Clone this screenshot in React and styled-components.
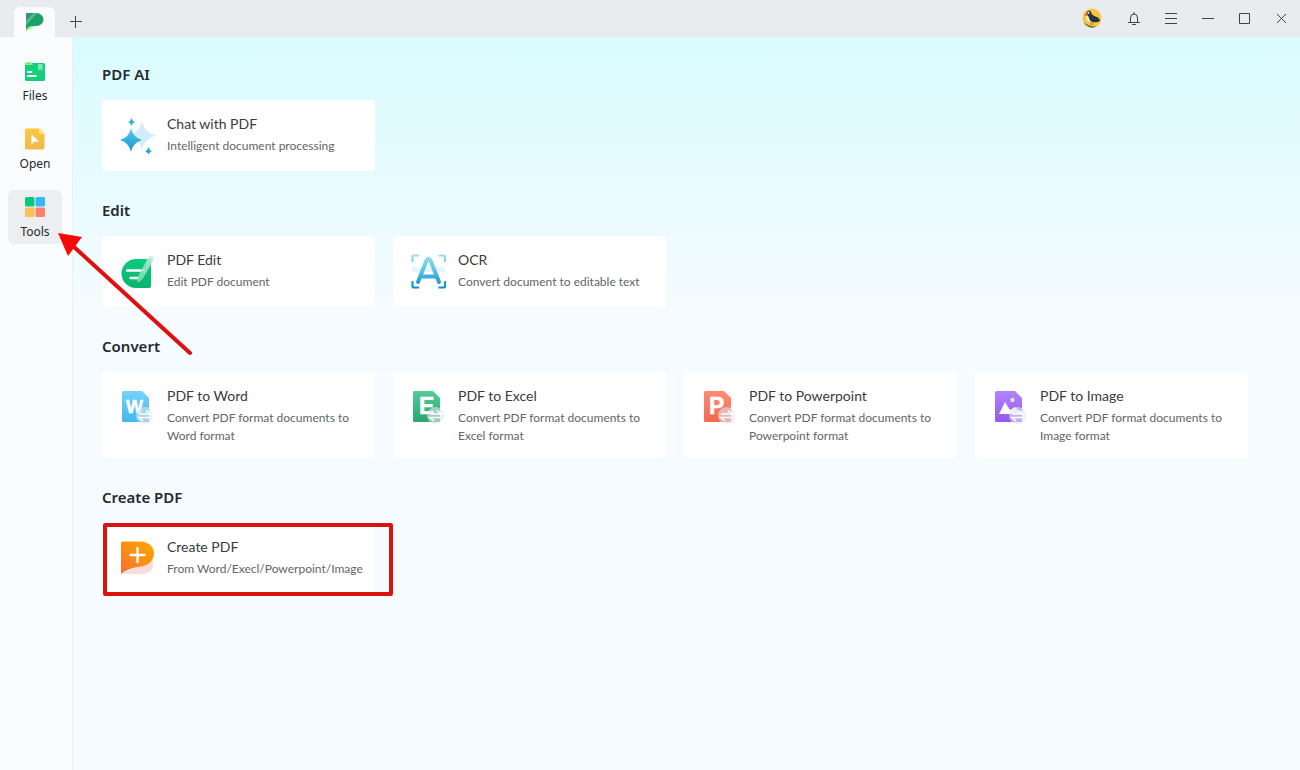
import styled, { createGlobalStyle } from 'styled-components';

const FilesIcon = () => (
	<svg width='24' height='24' viewBox='0 0 24 24'>
		<rect x='2' y='4' width='20' height='18' rx='1.500' fill='#12cf7c' />
		<path d='M2 6V4.500A1.500 1.500 0 0 1 3.500 3H8l2 3z' fill='#8dec8c' />
		<path d='M15 5h4.500v7l-2.200-1.800L15 12z' fill='#7be6b0' />
		<path d='M5 13h3.500M5 17h8' stroke='#fff' strokeWidth='1.800' strokeLinecap='round' />
	</svg>
);

const OpenIcon = () => (
	<svg width='24' height='24' viewBox='0 0 24 24'>
		<defs>
			<linearGradient id='open' x1='0' y1='0' x2='0' y2='1'>
				<stop offset='0' stopColor='#fac83f' />
				<stop offset='1' stopColor='#f0b94f' />
			</linearGradient>
		</defs>
		<path d='M3.500 1.500H16l5.500 5.500v13.500a2 2 0 0 1-2 2h-16a1.500 1.500 0 0 1-1.500-1.500V3a1.500 1.500 0 0 1 1.500-1.500z' fill='url(#open)' />
		<path d='M16 1.500h1.500l4 4V7h-4a1.500 1.500 0 0 1-1.500-1.500z' fill='#ffe57c' />
		<path d='M8.500 7.200v10.300l2.700-2.700h5z' fill='#fff' />
	</svg>
);

const ToolsIcon = () => (
	<svg width='24' height='24' viewBox='0 0 24 24'>
		<rect x='2' y='2' width='9.500' height='9.500' rx='1.500' fill='#0bc878' />
		<rect x='12.500' y='2' width='9.500' height='9.500' rx='1.500' fill='#38b6f8' />
		<rect x='2' y='12.500' width='9.500' height='9.500' rx='1.500' fill='#fbc05a' />
		<rect x='12.500' y='12.500' width='9.500' height='9.500' rx='1.500' fill='#fb8468' />
	</svg>
);

const LogoIcon = () => (
	<svg width='20' height='20' viewBox='0 0 20 20'>
		<defs>
			<linearGradient id='logo' x1='0' y1='0' x2='1' y2='1'>
				<stop offset='0' stopColor='#2f9c70' />
				<stop offset='1' stopColor='#0aa564' />
			</linearGradient>
		</defs>
		<path d='M1 1h10.500a7 6.500 0 0 1 0 13H8L1 18.500z' fill='url(#logo)' />
		<path d='M1 9L9 1h3L1 13z' fill='#8bd8b8' opacity='0.500' />
		<path d='M1 18.800c1-3.500 3-5 8.500-4.800L7.500 15.500z' fill='#9cf77a' />
	</svg>
);

const AvatarIcon = () => (
	<svg width='20' height='20' viewBox='0 0 20 20'>
		<circle cx='10' cy='10' r='9.500' fill='#f6c544' />
		<path d='M1.500 14.500a9.500 9.500 0 0 0 13 4c-4 0-9-1.500-13-4z' fill='#6f7b35' />
		<path d='M4.500 4.500C6 2 9 2.500 9.200 4.500c.3 2 2 3 4.500 4 2.500 1 4.300 2.500 4.300 4.500-3 2-8.500 1.500-10.500-1C5.500 10 6.500 8 4.500 6z' fill='#263440' />
		<path d='M5 7.500c-1.500 2.500 0 6 4 6.500-1.500-2-2-4-2.700-6z' fill='#f5f0e2' />
		<path d='M5 4.200L2.500 6.500l.7 1.700L5.500 6.500z' fill='#e3662c' />
		<circle cx='6.500' cy='4.800' r='1' fill='#fff' />
		<path d='M9 13.500v3.500M11 14v3' stroke='#c0702a' strokeWidth='0.800' />
	</svg>
);

const BellIcon = () => (
	<svg width='16' height='16' viewBox='0 0 16 16' fill='none' stroke='#3c4247'>
		<path d='M8 2.500v1.500M4.500 12.500V8a3.500 4 0 0 1 7 0v4.500M2.500 12.500h11M6.500 14.500h3' strokeLinecap='round' />
	</svg>
);

const LineIcon = ({ d }) => (
	<svg width='16' height='16' viewBox='0 0 16 16' fill='none' stroke='#3c4247'>
		<path d={d} />
	</svg>
);

const ChatIcon = () => (
	<svg width='40' height='40' viewBox='0 0 40 40'>
		<defs>
			<linearGradient id='star' x1='0' y1='0' x2='0' y2='1'>
				<stop offset='0' stopColor='#62c8ee' />
				<stop offset='1' stopColor='#0b97cf' />
			</linearGradient>
		</defs>
		<path d='M25 7q2.500 12 14 14.500Q27.500 24 25 36q-2.500-12-14-14.500Q22.500 19 25 7z' fill='#d3edfb' />
		<path d='M14 14q2 9.500 11 12-9 2.500-11 12-2-9.500-11-12 9-2.500 11-12z' fill='url(#star)' />
		<path d='M14.500 4q.6 3 3.500 4-2.900 1-3.500 4-.6-3-3.500-4 2.900-1 3.500-4z' fill='#36aedd' />
		<path d='M31.500 33q.6 3 3.500 4-2.900 1-3.500 4-.6-3-3.500-4 2.900-1 3.500-4z' fill='#26a4d8' />
	</svg>
);

const EditIcon = () => (
	<svg width='40' height='40' viewBox='0 0 40 40'>
		<defs>
			<linearGradient id='edit' x1='0' y1='0' x2='0' y2='1'>
				<stop offset='0' stopColor='#0acb80' />
				<stop offset='1' stopColor='#0bb36e' />
			</linearGradient>
			<linearGradient id='pen' x1='1' y1='0' x2='0' y2='1'>
				<stop offset='0' stopColor='#c9eee0' />
				<stop offset='1' stopColor='#6fdcae' />
			</linearGradient>
		</defs>
		<path d='M19 9h15v27a2 2 0 0 1-2 2H19a14.500 14.500 0 0 1 0-29z' fill='url(#edit)' />
		<path d='M10 20.500h17M13.500 28h8' stroke='#fff' strokeWidth='2.400' strokeLinecap='round' />
		<path d='M31 8q2-3 4.500-1.500 2 1.500.5 4.500L25 30l-5 3 .5-6z' fill='url(#pen)' opacity='0.850' />
	</svg>
);

const OcrIcon = () => (
	<svg width='40' height='40' viewBox='0 0 40 40' fill='none'>
		<defs>
			<linearGradient id='ocr' gradientUnits='userSpaceOnUse' x1='0' y1='5' x2='0' y2='38'>
				<stop offset='0' stopColor='#9edbf5' />
				<stop offset='0.450' stopColor='#5cc3ea' />
				<stop offset='1' stopColor='#078fc5' />
			</linearGradient>
		</defs>
		<path
			d='M4.500 12V7A1.500 1.500 0 0 1 6 5.500h5M30.500 5.500h5A1.500 1.500 0 0 1 37 7v5M37 31v5a1.500 1.500 0 0 1-1.500 1.500h-5M11 37.500H6A1.500 1.500 0 0 1 4.500 36v-5'
			stroke='url(#ocr)'
			strokeWidth='2.200'
		/>
		<path d='M4 17h33v5H4z' fill='#d8f1fb' opacity='0.700' />
		<path d='M10 32l8.500-21.500q2-3 4 0L31 32M13.500 26.500h14' stroke='url(#ocr)' strokeWidth='4' strokeLinecap='round' strokeLinejoin='round' />
	</svg>
);

const sheetColors = {
	word: ['#76d2fb', '#43b8ea'],
	excel: ['#55cb99', '#2ba472'],
	ppt: ['#fd8d74', '#f2694e'],
	image: ['#b184fb', '#9558ef'],
};

const SheetIcon = ({ kind, children }) => (
	<svg width='40' height='40' viewBox='0 0 40 40'>
		<defs>
			<linearGradient id={kind} x1='0' y1='0' x2='0' y2='1'>
				<stop offset='0' stopColor={sheetColors[kind][0]} />
				<stop offset='1' stopColor={sheetColors[kind][1]} />
			</linearGradient>
		</defs>
		<path d='M6.500 5H25l7 7v24H6.500A1.500 1.500 0 0 1 5 34.500v-28A1.500 1.500 0 0 1 6.500 5z' fill={`url(#${kind})`} />
		{children}
		<circle cx='27.500' cy='29.500' r='8.500' fill='#dfe6ee' opacity='0.600' />
		<path d='M22 28h11l-4-3.500M33 31.500H22l4 3.500' fill='none' stroke='#fff' strokeWidth='1.600' />
	</svg>
);

const CreateIcon = () => (
	<svg width='40' height='40' viewBox='0 0 40 40'>
		<defs>
			<linearGradient id='create' x1='1' y1='0' x2='0' y2='1'>
				<stop offset='0' stopColor='#ffa500' />
				<stop offset='0.500' stopColor='#fd8f12' />
				<stop offset='1' stopColor='#fb6a3c' />
			</linearGradient>
		</defs>
		<path d='M4 37L36 24q1 5-2 9-3 4-9 4z' fill='#fddcd7' />
		<path d='M6 4.500h17.500c7.500 0 13.500 5 13.500 11.500 0 7.500-5 12-13 13.500C14 31 9 33 4 37V6.500a2 2 0 0 1 2-2z' fill='url(#create)' />
		<path d='M20.500 11v14M13.500 18h14' stroke='#fff' strokeWidth='2.400' strokeLinecap='round' />
	</svg>
);

const sections = [
	{
		title: 'PDF AI',
		tools: [{ name: 'Chat with PDF', text: 'Intelligent document processing', icon: <ChatIcon /> }],
	},
	{
		title: 'Edit',
		tools: [
			{ name: 'PDF Edit', text: 'Edit PDF document', icon: <EditIcon /> },
			{ name: 'OCR', text: 'Convert document to editable text', icon: <OcrIcon /> },
		],
	},
	{
		title: 'Convert',
		tools: [
			{
				name: 'PDF to Word',
				text: 'Convert PDF format documents to Word format',
				icon: (
					<SheetIcon kind='word'>
						<SheetLetter x='9' y='27'>W</SheetLetter>
					</SheetIcon>
				),
			},
			{
				name: 'PDF to Excel',
				text: 'Convert PDF format documents to Excel format',
				icon: (
					<SheetIcon kind='excel'>
						<SheetLetter x='11' y='28'>E</SheetLetter>
					</SheetIcon>
				),
			},
			{
				name: 'PDF to Powerpoint',
				text: 'Convert PDF format documents to Powerpoint format',
				icon: (
					<SheetIcon kind='ppt'>
						<SheetLetter x='10' y='28'>P</SheetLetter>
					</SheetIcon>
				),
			},
			{
				name: 'PDF to Image',
				text: 'Convert PDF format documents to Image format',
				icon: (
					<SheetIcon kind='image'>
						<path d='M9 28l6-12 5 8 5-3 7 7z' fill='#fff' />
						<circle cx='22.500' cy='14' r='2.200' fill='#eadcff' />
					</SheetIcon>
				),
			},
		],
	},
	{
		title: 'Create PDF',
		tools: [
			{ name: 'Create PDF', text: 'From Word/Execl/Powerpoint/Image', icon: <CreateIcon />, marked: true },
		],
	},
];

function SheetLetter({ x, y, children }) {
	return (
		<text
			x={x}
			y={y}
			fill='#fff'
			fontFamily='Liberation Sans, sans-serif'
			fontWeight='700'
			fontSize={children === 'W' ? 18 : 23}
			stroke='#fff'
			strokeWidth='0.500'
		>
			{children}
		</text>
	);
}

const App = () => {
	return (
		<Window>
			<GlobalStyle />
			<TitleBar>
				<HomeTab aria-label='Home'>
					<LogoIcon />
				</HomeTab>
				<NewTab aria-label='New tab'>
					<LineIcon d='M7.500 2v12M2 7.500h12' />
				</NewTab>
				<WindowButtons>
					<BarButton $wide aria-label='Account'><AvatarIcon /></BarButton>
					<BarButton aria-label='Notifications'><BellIcon /></BarButton>
					<BarButton aria-label='Menu'><LineIcon d='M2 3.500h12M2 8.500h12M2 13.500h12' /></BarButton>
					<BarButton aria-label='Minimize'><LineIcon d='M2 8.500h12' /></BarButton>
					<BarButton aria-label='Maximize'><LineIcon d='M2.500 3.500h10v10h-10z' /></BarButton>
					<BarButton aria-label='Close'><LineIcon d='M3 4l9 9M12 4l-9 9' /></BarButton>
				</WindowButtons>
			</TitleBar>

			<Body>
				<Sidebar>
					<NavButton><FilesIcon />Files</NavButton>
					<NavButton><OpenIcon />Open</NavButton>
					<NavButton $active>
						<ToolsIcon />
						Tools
						<Arrow width='142' height='132' viewBox='0 0 142 132'>
							<path d='M15 13L132 120' stroke='#e01010' strokeWidth='4' strokeLinecap='round' />
							<path d='M0 0L24 4 10 23z' fill='#f80808' />
						</Arrow>
					</NavButton>
				</Sidebar>

				<Main>
					{sections.map(({ title, tools }) => (
						<section key={title}>
							<SectionTitle>{title}</SectionTitle>
							<CardGrid>
								{tools.map(({ name, text, icon, marked }) => (
									<Card key={name}>
										{icon}
										<CardText>
											<CardName>{name}</CardName>
											<CardInfo>{text}</CardInfo>
										</CardText>
										{marked && <Marker />}
									</Card>
								))}
							</CardGrid>
						</section>
					))}
				</Main>
			</Body>
		</Window>
	);
};

export default App;

const GlobalStyle = createGlobalStyle`
	* {
		box-sizing: border-box;
	}
	body {
		margin: 0;
		font-family: 'Noto Sans', 'Open Sans', sans-serif;
		color: #24292e;
	}
	button {
		border: 0;
		padding: 0;
		background: none;
		font: inherit;
		color: inherit;
		cursor: pointer;
	}
	svg {
		flex-shrink: 0;
	}
`;

const Window = styled.div`
	display: flex;
	flex-direction: column;
	min-height: 100vh;
`;

const TitleBar = styled.header`
	display: flex;
	align-items: flex-start;
	height: 37px;
	padding-left: 14px;
	background: #e8ecef;
`;

const HomeTab = styled.button`
	display: flex;
	align-items: center;
	justify-content: center;
	align-self: flex-end;
	width: 41px;
	height: 30px;
	border-radius: 6px 6px 0 0;
	background: #f9fbfd;
`;

const NewTab = styled(HomeTab)`
	width: 42px;
	background: none;
`;

const BarButton = styled.button`
	display: flex;
	align-items: center;
	justify-content: center;
	width: ${({ $wide }) => ($wide ? '46px' : '36px')};
	height: 36px;
`;

const WindowButtons = styled.div`
	display: flex;
	gap: 1px;
	margin-left: auto;
`;

const Body = styled.div`
	display: flex;
	flex: 1;
`;

const Sidebar = styled.nav`
	display: flex;
	flex-direction: column;
	gap: 14px;
	width: 73px;
	padding: 17px 10px 0 8px;
	border-right: 1px solid #edf1f4;
	background: #f9fbfd;
`;

const NavButton = styled.button`
	position: relative;
	display: flex;
	flex-direction: column;
	align-items: center;
	gap: 4px;
	height: 54px;
	padding-top: 5px;
	border-radius: 6px;
	background: ${({ $active }) => ($active ? '#eceef0' : 'transparent')};
	font-size: 12px;
	line-height: 18px;
`;

const Arrow = styled.svg`
	position: absolute;
	top: 43px;
	left: 50px;
	z-index: 1;
	pointer-events: none;
`;

const Main = styled.main`
	display: flex;
	flex: 1;
	flex-direction: column;
	gap: 29px;
	padding: 27px 52px 27px 29px;
	background: linear-gradient(#d9fcff, #f5fbff 270px);
`;

const SectionTitle = styled.h2`
	margin: 0 0 15px;
	font-size: 15px;
	font-weight: 600;
	line-height: 21px;
`;

const CardGrid = styled.div`
	display: grid;
	grid-template-columns: repeat(4, 1fr);
	gap: 18px;
`;

const Card = styled.button`
	position: relative;
	display: flex;
	align-items: flex-start;
	gap: 10px;
	min-height: 71px;
	padding: 14px 8px 13px 15px;
	border-radius: 4px;
	background: #fff;
	font-family: Lato, 'Noto Sans', sans-serif;
	text-align: left;
`;

const CardText = styled.span`
	display: flex;
	flex-direction: column;
	gap: 3px;
`;

const CardName = styled.span`
	font-size: 14px;
	line-height: 20px;
	color: #383c40;
`;

const CardInfo = styled.span`
	font-size: 12px;
	line-height: 18px;
	color: #62666a;
`;

const Marker = styled.span`
	position: absolute;
	inset: 0 -18px -2px 1px;
	border: 4px solid #d9140f;
	border-radius: 2px;
`;
